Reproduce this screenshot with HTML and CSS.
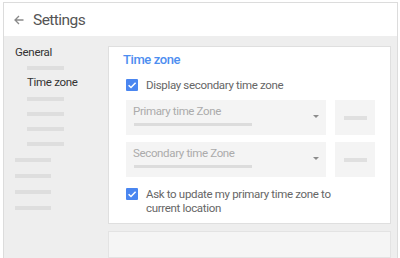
FILE: index.html
```html
<!DOCTYPE html>
<html>
<head>
<meta charset="utf-8">
<link rel="stylesheet" href="styles.css">
</head>
<body>
<div class="frame">
  <header class="header">
    <svg class="back" width="10" height="10" viewBox="0 0 10 10"><path d="M9.5 5H1M5 1L1 5L5 9" fill="none" stroke="#8a8a8a" stroke-width="1.3"/></svg>
    <span class="title">Settings</span>
  </header>
  <div class="main">
    <nav class="side">
      <div class="nav-item">General</div>
      <div class="bar sub b1"></div>
      <div class="nav-item sub ti">Time zone</div>
      <div class="bar sub b2"></div>
      <div class="bar sub b3"></div>
      <div class="bar sub b3"></div>
      <div class="bar sub b3"></div>
      <div class="bar top b4"></div>
      <div class="bar top b5"></div>
      <div class="bar top b5"></div>
      <div class="bar top b5"></div>
    </nav>
    <div class="content">
      <section class="card">
        <h2 class="card-title">Time zone</h2>
        <label class="check-row r1">
          <span class="check"><svg width="12" height="12" viewBox="0 0 12 12"><path d="M2.6 6.2L5 8.5L9.6 3.8" fill="none" stroke="#fff" stroke-width="1.5"/></svg></span>
          <span class="check-text">Display secondary time zone</span>
        </label>
        <div class="select-row s1">
          <div class="select">
            <div class="select-label">Primary time Zone</div>
            <div class="select-bar"></div>
            <span class="caret"></span>
          </div>
          <div class="mini"><span class="mini-bar"></span></div>
        </div>
        <div class="select-row s2">
          <div class="select">
            <div class="select-label">Secondary time Zone</div>
            <div class="select-bar"></div>
            <span class="caret"></span>
          </div>
          <div class="mini"><span class="mini-bar"></span></div>
        </div>
        <label class="check-row r2">
          <span class="check"><svg width="12" height="12" viewBox="0 0 12 12"><path d="M2.6 6.2L5 8.5L9.6 3.8" fill="none" stroke="#fff" stroke-width="1.5"/></svg></span>
          <span class="check-text">Ask to update my primary time zone to<br>current location</span>
        </label>
      </section>
      <section class="card2"></section>
    </div>
  </div>
</div>
</body>
</html>
```
FILE: styles.css
```css
* { box-sizing: border-box; }
html, body { margin: 0; padding: 0; background: #fff; overflow: hidden; }
body {
  font-family: Roboto, "Noto Sans", "Liberation Sans", sans-serif;
  width: 400px;
  height: 258px;
}
.frame {
  margin: 2px 0 0 3px;
  width: 395px;
  height: 256px;
  border: 1px solid #dcdcdc;
  border-bottom: 0;
  background: #eeeeee;
  display: flex;
  flex-direction: column;
  overflow: hidden;
}
.header {
  height: 33px;
  background: #fff;
  display: flex;
  align-items: center;
  padding-left: 10px;
  flex: none;
}
.back { margin-right: 9px; margin-top: 0; }
.title {
  font-size: 15.5px;
  color: #555;
  letter-spacing: -0.55px;
}
.main {
  display: flex;
  flex: 1;
}
.side {
  width: 104px;
  flex: none;
  padding-top: 8px;
  display: flex;
  flex-direction: column;
}
.nav-item {
  font-size: 11.5px;
  line-height: 16px;
  height: 16px;
  color: #333;
  padding-left: 11px;
  letter-spacing: -0.3px;
}
.nav-item.sub { padding-left: 23px; }
.nav-item.ti { margin-top: 4px; }
.bar {
  height: 4px;
  background: #dedede;
  flex: none;
}
.bar.sub { width: 37px; margin-left: 23px; }
.bar.top { width: 36px; margin-left: 11px; }
.b1 { margin-top: 6px; }
.b2 { margin-top: 7px; }
.b3 { margin-top: 11px; }
.b4 { margin-top: 12px; }
.b5 { margin-top: 12px; }
.content {
  flex: 1;
  padding: 10px 6px 0 0;
  display: flex;
  flex-direction: column;
  gap: 7px;
}
.card {
  background: #fff;
  border: 1px solid #dfdfdf;
  height: 178px;
  flex: none;
  padding: 5px 0 0 17px;
  display: flex;
  flex-direction: column;
}
.card2 {
  background: #f5f5f5;
  border: 1px solid #e3e3e3;
  flex: 1;
}
.card-title {
  margin: 0 0 0 -3px;
  font-size: 13px;
  line-height: 16px;
  font-weight: 500;
  color: #4d8ef0;
  letter-spacing: -0.4px;
}
.check-row {
  display: flex;
  align-items: flex-start;
  gap: 8px;
}
.r1 { margin-top: 10px; }
.r2 { margin-top: 10px; }
.check {
  width: 12px;
  height: 12px;
  background: #4a86f0;
  border-radius: 1px;
  flex: none;
  display: flex;
  margin-top: 1px;
}
.check-text {
  font-size: 11.5px;
  line-height: 14px;
  color: #666;
  letter-spacing: -0.33px;
}
.select-row {
  display: flex;
  gap: 9px;
}
.s1 { margin-top: 8px; }
.s2 { margin-top: 7px; }
.select {
  width: 200px;
  height: 35px;
  background: #f4f4f4;
  position: relative;
  padding: 4px 0 0 7px;
}
.select-label {
  font-size: 11.5px;
  line-height: 14px;
  color: #ababab;
  letter-spacing: -0.35px;
}
.select-bar {
  width: 118px;
  height: 3px;
  margin: 5px 0 0 1px;
  background: #dcdcdc;
}
.caret {
  position: absolute;
  left: 187px;
  top: 15px;
  width: 0;
  height: 0;
  border-left: 3px solid transparent;
  border-right: 3px solid transparent;
  border-top: 3px solid #8c8c8c;
}
.mini {
  width: 40px;
  height: 35px;
  background: #f4f4f4;
  display: flex;
  align-items: center;
  justify-content: center;
}
.mini-bar {
  width: 23px;
  height: 4px;
  background: #e0e0e0;
}
```
